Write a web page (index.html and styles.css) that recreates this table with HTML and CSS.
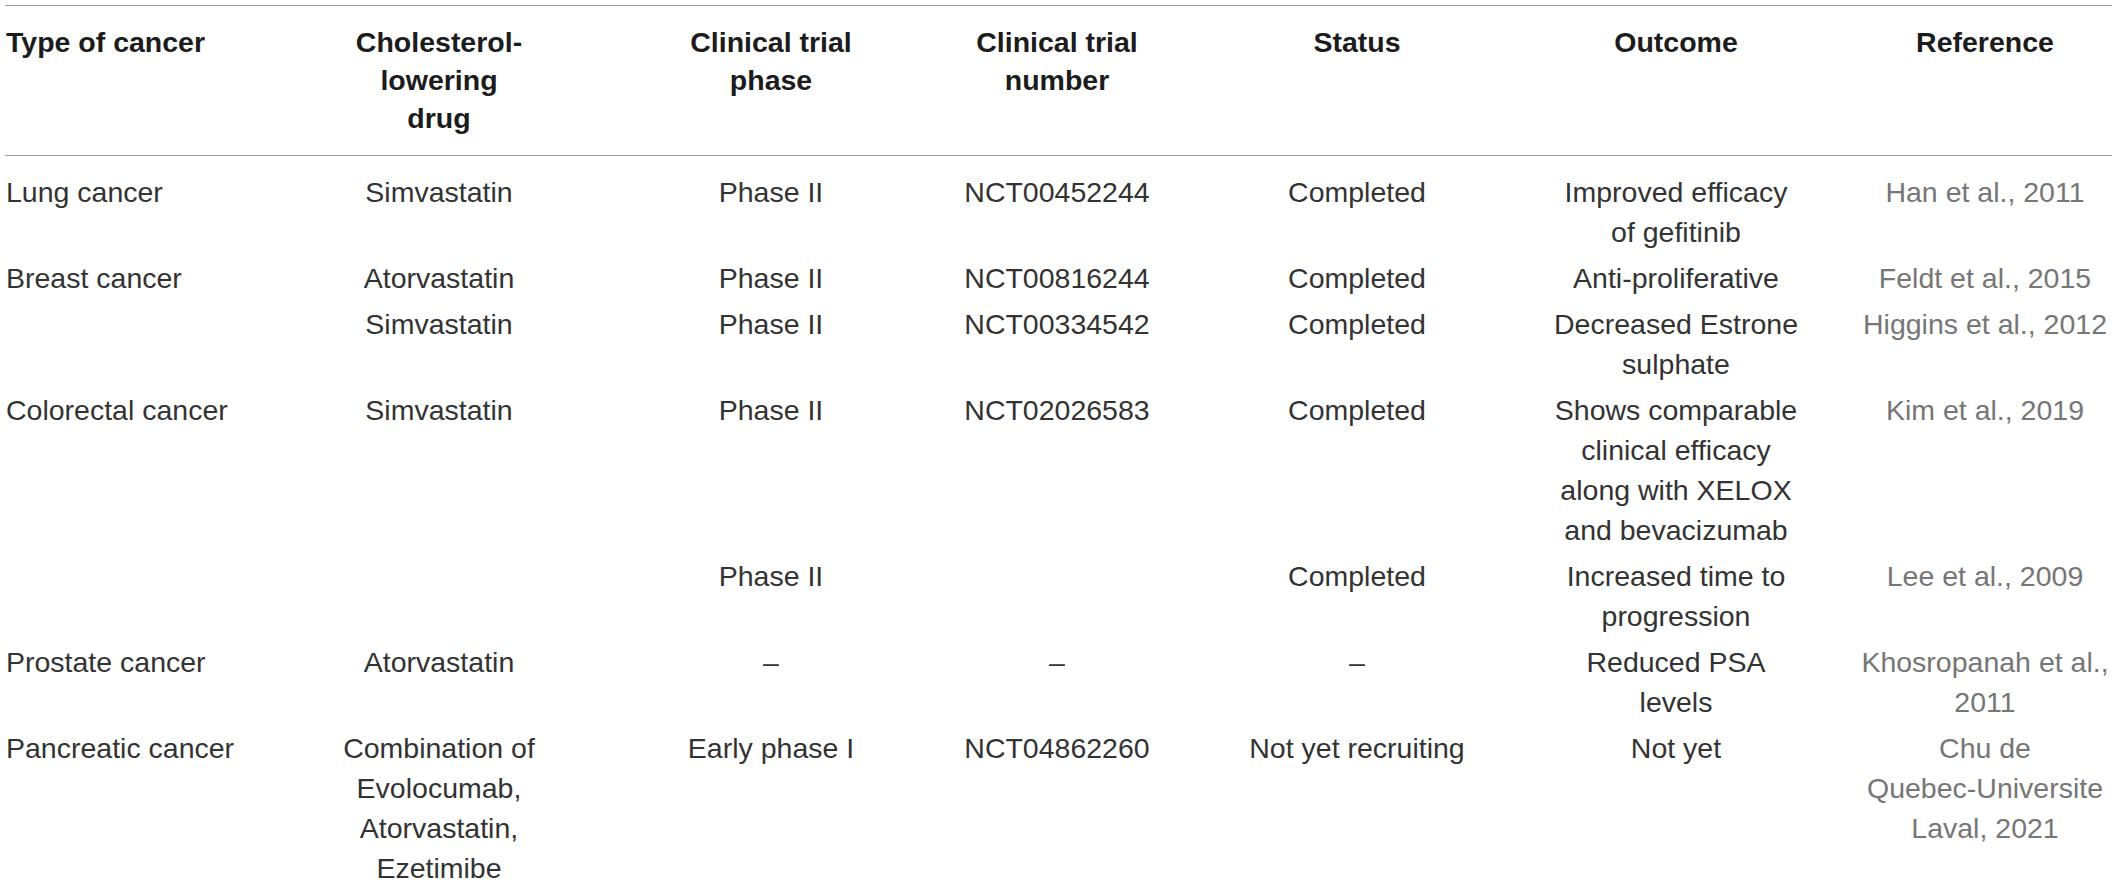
FILE: index.html
```html
<!DOCTYPE html>
<html lang="en">
<head>
<meta charset="utf-8">
<title>Cholesterol-lowering drugs in cancer clinical trials</title>
<link rel="stylesheet" href="styles.css">
</head>
<body>
<div class="page">
  <table class="trials">
    <colgroup>
      <col class="w-type">
      <col class="w-drug">
      <col class="w-phase">
      <col class="w-number">
      <col class="w-status">
      <col class="w-outcome">
      <col class="w-ref">
    </colgroup>
    <thead>
      <tr>
        <th>Type of cancer</th>
        <th>Cholesterol-lowering drug</th>
        <th>Clinical trial phase</th>
        <th>Clinical trial number</th>
        <th>Status</th>
        <th>Outcome</th>
        <th>Reference</th>
      </tr>
    </thead>
    <tbody>
      <tr>
        <td>Lung cancer</td>
        <td>Simvastatin</td>
        <td>Phase II</td>
        <td>NCT00452244</td>
        <td>Completed</td>
        <td>Improved efficacy of gefitinib</td>
        <td>Han et al., 2011</td>
      </tr>
      <tr>
        <td>Breast cancer</td>
        <td>Atorvastatin</td>
        <td>Phase II</td>
        <td>NCT00816244</td>
        <td>Completed</td>
        <td>Anti-proliferative</td>
        <td>Feldt et al., 2015</td>
      </tr>
      <tr>
        <td></td>
        <td>Simvastatin</td>
        <td>Phase II</td>
        <td>NCT00334542</td>
        <td>Completed</td>
        <td>Decreased Estrone sulphate</td>
        <td>Higgins et al., 2012</td>
      </tr>
      <tr>
        <td>Colorectal cancer</td>
        <td>Simvastatin</td>
        <td>Phase II</td>
        <td>NCT02026583</td>
        <td>Completed</td>
        <td>Shows comparable clinical efficacy along with XELOX and bevacizumab</td>
        <td>Kim et al., 2019</td>
      </tr>
      <tr>
        <td></td>
        <td></td>
        <td>Phase II</td>
        <td></td>
        <td>Completed</td>
        <td>Increased time to progression</td>
        <td>Lee et al., 2009</td>
      </tr>
      <tr>
        <td>Prostate cancer</td>
        <td>Atorvastatin</td>
        <td>–</td>
        <td>–</td>
        <td>–</td>
        <td>Reduced PSA levels</td>
        <td>Khosropanah et al., 2011</td>
      </tr>
      <tr>
        <td>Pancreatic cancer</td>
        <td>Combination of Evolocumab, Atorvastatin, Ezetimibe</td>
        <td>Early phase I</td>
        <td>NCT04862260</td>
        <td>Not yet recruiting</td>
        <td>Not yet</td>
        <td>Chu de <span class="nobreak">Quebec-Universite</span> Laval, 2021</td>
      </tr>
    </tbody>
  </table>
</div>
</body>
</html>
```

FILE: styles.css
```css
body {
  margin: 0;
  background: #ffffff;
}

.page {
  padding: 5px 5px 0 5px;
}

.trials {
  width: 2107px;
  table-layout: fixed;
  border-collapse: collapse;
  font-family: "Liberation Sans", Arial, Helvetica, sans-serif;
  font-size: 28.5px;
  color: #333333;
}

.w-type { width: 235px; }
.w-drug { width: 380px; }
.w-phase { width: 300px; }
.w-number { width: 280px; }
.w-status { width: 310px; }
.w-outcome { width: 330px; }
.w-ref { width: 272px; }

.trials th,
.trials td {
  text-align: center;
  vertical-align: top;
  padding: 3px 0;
}

.trials th {
  font-weight: bold;
  color: #1c1c1c;
  line-height: 38px;
  padding-top: 17px;
  padding-bottom: 18px;
  border-top: 1px solid #9c9c9c;
  border-bottom: 1px solid #9c9c9c;
}

.trials td {
  line-height: 40px;
}

.trials tbody tr:first-child td {
  padding-top: 16px;
}

/* column paddings */
.trials th:nth-child(1),
.trials td:nth-child(1) {
  text-align: left;
  padding-left: 1px;
  padding-right: 0;
}

.trials td:nth-child(2) {
  padding-left: 100px;
  padding-right: 82px;
}

.trials th:nth-child(2) {
  padding-left: 110px;
  padding-right: 92px;
}

.trials th:nth-child(3),
.trials td:nth-child(3) {
  padding-left: 48px;
  padding-right: 46px;
}

.trials th:nth-child(4),
.trials td:nth-child(4) {
  padding-left: 14px;
  padding-right: 20px;
}

.trials th:nth-child(5),
.trials td:nth-child(5) {
  padding-left: 40px;
  padding-right: 36px;
}

.trials th:nth-child(6),
.trials td:nth-child(6) {
  padding-left: 41px;
  padding-right: 39px;
}

.trials th:nth-child(7),
.trials td:nth-child(7) {
  padding-left: 18px;
  padding-right: 0;
}

.trials td:nth-child(7) {
  color: #767676;
}

.nobreak {
  white-space: nowrap;
}
```
